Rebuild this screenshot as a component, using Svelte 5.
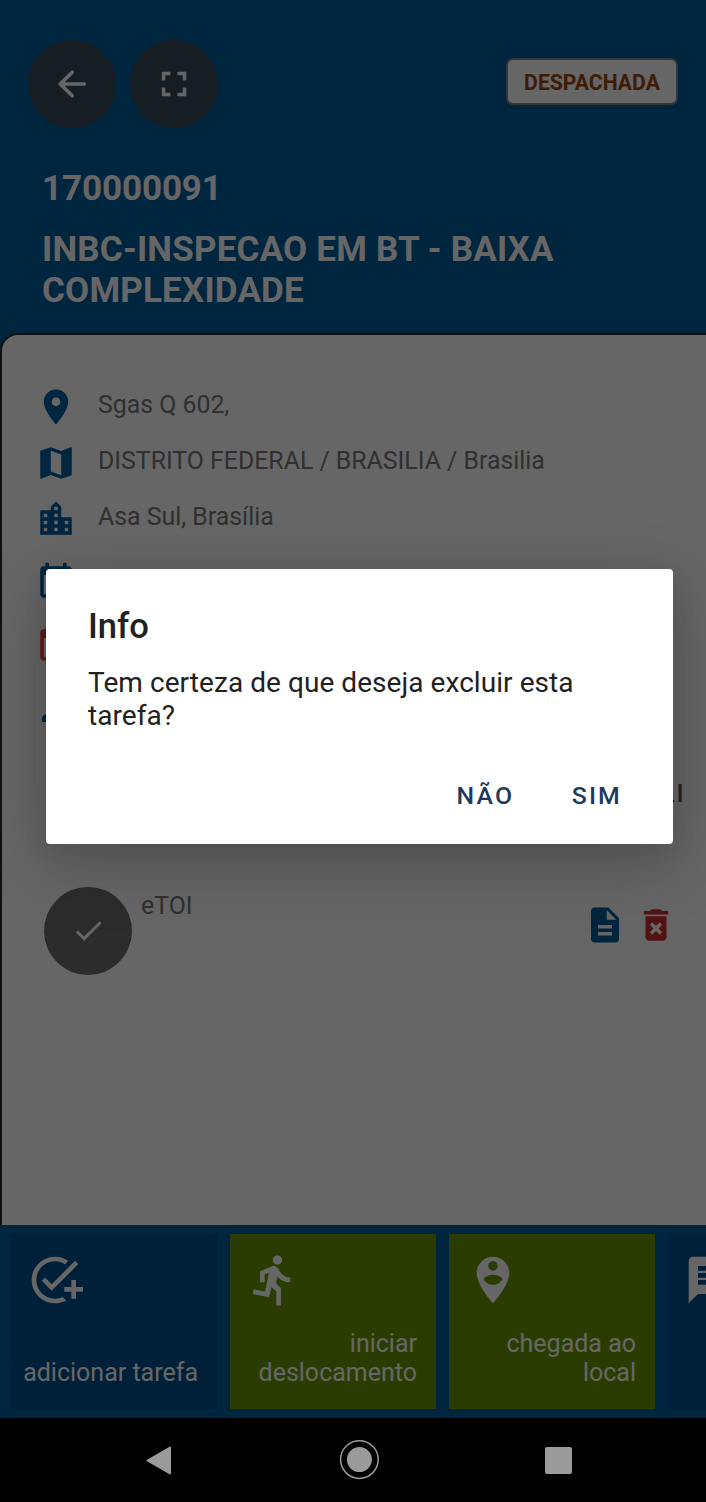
<script>
  const P = {
    pin: 'M12 2C8.13 2 5 5.13 5 9c0 5.25 7 13 7 13s7-7.75 7-13c0-3.87-3.13-7-7-7zm0 9.5c-1.38 0-2.5-1.12-2.5-2.5s1.12-2.5 2.5-2.5 2.5 1.12 2.5 2.5-1.12 2.5-2.5 2.5z',
    map: 'M20.5 3l-.16.03L15 5.1 9 3 3.36 4.9c-.21.07-.36.25-.36.48V20.5c0 .28.22.5.5.5l.16-.03L9 18.9l6 2.1 5.64-1.9c.21-.07.36-.25.36-.48V3.5c0-.28-.22-.5-.5-.5zM15 19l-6-2.11V5l6 2.11V19z',
    city: 'M15 11V5l-3-3-3 3v2H3v14h18V11h-6zm-8 8H5v-2h2v2zm0-4H5v-2h2v2zm0-4H5V9h2v2zm6 8h-2v-2h2v2zm0-4h-2v-2h2v2zm0-4h-2V9h2v2zm0-4h-2V5h2v2zm6 12h-2v-2h2v2zm0-4h-2v-2h2v2z',
    calendar: 'M19 3h-1V1h-2v2H8V1H6v2H5c-1.11 0-2 .9-2 2v14c0 1.1.89 2 2 2h14c1.1 0 2-.9 2-2V5c0-1.1-.9-2-2-2zm0 16H5V8h14v11z',
    person: 'M12 12c2.21 0 4-1.79 4-4s-1.79-4-4-4-4 1.79-4 4 1.79 4 4 4zm0 2c-2.67 0-8 1.34-8 4v2h16v-2c0-2.66-5.33-4-8-4z',
    doc: 'M14 2H6c-1.1 0-1.99.9-1.99 2L4 20c0 1.1.89 2 1.99 2H18c1.1 0 2-.9 2-2V8l-6-6zm2 16H8v-2h8v2zm0-4H8v-2h8v2zm-3-5V3.5L18.5 9H13z',
    trash: 'M6 19c0 1.1.9 2 2 2h8c1.1 0 2-.9 2-2V7H6v12zm2.46-7.12l1.41-1.41L12 12.59l2.12-2.12 1.41 1.41L13.41 14l2.12 2.12-1.41 1.41L12 15.41l-2.12 2.12-1.41-1.41L10.59 14l-2.13-2.12zM15.5 4l-.7-.7q-.3-.3-.8-.3h-4q-.5 0-.8.3l-.7.7H5v2h14V4z',
    check: 'M9 16.17L4.83 12l-1.42 1.41L9 19 21 7l-1.41-1.41z',
    fullscreen: 'M7 14H5v5h5v-2H7v-3zm-2-4h2V7h3V5H5v5zm12 7h-3v2h5v-5h-2v3zM14 5v2h3v3h2V5h-5z',
    addTask: 'M22 5.18L10.59 16.6l-4.24-4.24 1.41-1.41 2.83 2.83 10-10L22 5.18zM12 20c-4.42 0-8-3.58-8-8s3.58-8 8-8c1.57 0 3.04.46 4.28 1.25l1.45-1.45C16.1 2.67 14.13 2 12 2 6.48 2 2 6.48 2 12s4.48 10 10 10c1.73 0 3.36-.44 4.78-1.22l-1.5-1.5c-1 .46-2.11.72-3.28.72zM19 15h-3v2h3v3h2v-3h3v-2h-3v-3h-2v3z',
    run: 'M13.49 5.48c1.1 0 2-.9 2-2s-.9-2-2-2-2 .9-2 2 .9 2 2 2zm-3.6 13.9l1-4.4 2.1 2v6h2v-7.5l-2.1-2 .6-3c1.3 1.5 3.3 2.5 5.5 2.5v-2c-1.9 0-3.5-1-4.3-2.4l-1-1.6c-.4-.6-1-1-1.7-1-.3 0-.5.1-.8.1l-5.2 2.2v4.7h2v-3.4l1.8-.7-1.6 8.1-4.9-1-.4 2 7 1.4z',
    arrive: 'M12 2C8.14 2 5 5.14 5 9c0 5.25 7 13 7 13s7-7.75 7-13c0-3.86-3.14-7-7-7zm0 2c1.1 0 2 .9 2 2 0 1.11-.9 2-2 2s-2-.89-2-2c0-1.1.9-2 2-2zm0 10c-1.67 0-3.14-.85-4-2.15.02-1.32 2.67-2.05 4-2.05s3.98.73 4 2.05c-.86 1.3-2.33 2.15-4 2.15z',
    chat: 'M20 2H4c-1.1 0-1.99.9-1.99 2L2 22l4-4h14c1.1 0 2-.9 2-2V4c0-1.1-.9-2-2-2zM6 9h12v2H6V9zm8 5H6v-2h8v2zm4-6H6V6h12v2z'
  };

  const rows = [
    { icon: P.pin, text: 'Sgas Q 602,' },
    { icon: P.map, text: 'DISTRITO FEDERAL / BRASILIA / Brasilia' },
    { icon: P.city, text: 'Asa Sul, Brasília' },
    { icon: P.calendar, tall: true },
    { icon: P.calendar, tall: true, red: true },
    { icon: P.person, tall: true }
  ];

  const tiles = [
    { icon: P.addTask, text: 'adicionar tarefa' },
    { icon: P.run, text: 'iniciar deslocamento', green: true },
    { icon: P.arrive, text: 'chegada ao local', green: true },
    { icon: P.chat, text: '' }
  ];
</script>

{#snippet glyph(d, size)}
  <svg class="glyph" width={size} height={size} viewBox="0 0 24 24"><path {d} fill="currentColor" fill-rule="evenodd" /></svg>
{/snippet}

<div class="screen">
  <header>
    <div class="bar">
      <button class="round" aria-label="Voltar">
        <svg width="42" height="42" viewBox="0 0 42 42" fill="none" stroke="#fff" stroke-width="3.7" stroke-linecap="round" stroke-linejoin="round">
          <path d="M33.3 21H9.3M21.3 9.3L9.3 21l12 11.7" />
        </svg>
      </button>
      <button class="round" aria-label="Tela cheia">{@render glyph(P.fullscreen, 42)}</button>
      <span class="badge">DESPACHADA</span>
    </div>
    <h1>170000091</h1>
    <h2>INBC-INSPECAO EM BT - BAIXA COMPLEXIDADE</h2>
  </header>

  <main>
    <ul>
      {#each rows as r}
        <li class:tall={r.tall} class:red={r.red}>
          {@render glyph(r.icon, 42)}
          {#if r.text}<span>{r.text}</span>{/if}
        </li>
      {/each}
    </ul>
    <p class="section">AI</p>
    <div class="task">
      <div class="done">{@render glyph(P.check, 35)}</div>
      <span class="name">eTOI</span>
      <div class="doc">{@render glyph(P.doc, 42)}</div>
      <div class="trash">{@render glyph(P.trash, 42)}</div>
    </div>
  </main>

  <footer>
    {#each tiles as t}
      <div class="tile" class:green={t.green}>
        {@render glyph(t.icon, 56)}
        <span>{t.text}</span>
      </div>
    {/each}
  </footer>

  <nav>
    <svg width="30" height="34" viewBox="0 0 30 34"><path d="M3.5 17.5L26 4.5v26z" fill="#9b9b9b" stroke="#9b9b9b" stroke-width="2" stroke-linejoin="round" /></svg>
    <svg width="40" height="40" viewBox="0 0 40 40"><circle cx="20.4" cy="19.6" r="18.8" fill="none" stroke="#9b9b9b" stroke-width="1.5" /><circle cx="20.4" cy="19.6" r="12.5" fill="#9b9b9b" /></svg>
    <div class="square"></div>
  </nav>

  <div class="scrim">
    <div class="dialog">
      <h3>Info</h3>
      <p>Tem certeza de que deseja excluir esta tarefa?</p>
      <div class="actions">
        <button>NÃO</button>
        <button>SIM</button>
      </div>
    </div>
  </div>
</div>

<style>
  :global(body) { margin: 0; background: #000; }
  * { box-sizing: border-box; }
  .screen {
    position: relative;
    width: 706px;
    height: 1502px;
    overflow: hidden;
    display: flex;
    flex-direction: column;
    background: #005c9e;
    font-family: Roboto, sans-serif;
  }
  button { border: 0; padding: 0; margin: 0; background: none; font-family: inherit; }
  h1, h2, h3, p, ul { margin: 0; padding: 0; }
  .glyph { display: block; flex: none; }
  header { height: 333px; padding: 40px 28px 0; color: #fff; flex: none; }
  .bar { display: flex; gap: 14px; height: 88px; }
  .round {
    width: 88px;
    height: 88px;
    border-radius: 50%;
    background: #394d5a;
    color: #fff;
    display: flex;
    align-items: center;
    justify-content: center;
  }
  .badge {
    margin: 18px 0 0 auto;
    width: 172px;
    height: 47px;
    border: 2px solid #858585;
    border-radius: 7px;
    background: #fff;
    color: #9e460a;
    font-size: 21.2px;
    font-weight: 700;
    line-height: 46px;
    text-align: center;
  }
  h1 { margin: 40px 14px 0; font-size: 35px; line-height: 41px; letter-spacing: -0.1px; }
  h2 { margin: 20px 14px 0; font-size: 35px; line-height: 41px; letter-spacing: 0.19px; }
  main {
    width: 720px;
    height: 892px;
    flex: none;
    border: 2px solid #2b2b2b;
    border-bottom: 0;
    border-top-left-radius: 18px;
    background: #fff;
    color: #787878;
    font-size: 24.85px;
    padding: 44px 0 0 33px;
  }
  ul { list-style: none; }
  li { display: flex; align-items: center; gap: 21px; height: 56px; color: #005c9e; }
  li.tall { height: 63px; padding-top: 7px; }
  li.red { color: #f44336; }
  li span { padding-bottom: 5px; color: #787878; }
  .section { margin: 42px 32.5px 0 0; padding-top: 1px; text-align: right; line-height: 30px; letter-spacing: 2px; color: #555; font-weight: 500; }
  .task { display: flex; margin-top: 78px; padding-left: 9px; }
  .done {
    width: 88px;
    height: 88px;
    border-radius: 50%;
    background: #6e6e6e;
    color: #fff;
    display: flex;
    align-items: center;
    justify-content: center;
    padding-bottom: 1px;
  }
  .name { margin-left: 9px; line-height: 38px; width: 443px; }
  .doc { color: #005c9e; padding-top: 17px; }
  .trash { color: #d32f2f; padding: 17px 0 0 9px; }
  footer { display: flex; gap: 13px; height: 193px; padding: 9px 11px; flex: none; }
  .tile {
    flex: none;
    width: 206px;
    height: 175px;
    border-radius: 3px;
    background: #005091;
    color: #fff;
    padding: 18px 19px 22px 16px;
    display: flex;
    flex-direction: column;
    justify-content: space-between;
  }
  .tile.green { background: #6c9600; border-radius: 0; }
  .tile span { font-size: 25px; line-height: 29px; text-align: right; margin-left: -10px; }
  nav { position: relative; z-index: 2; height: 84px; background: #000; display: flex; align-items: center; flex: none; padding-left: 144px; }
  nav svg:nth-child(2) { margin-left: 165px; }
  .square { width: 27px; height: 27px; border-radius: 2px; background: #9b9b9b; margin-left: 166px; }
  .scrim { position: absolute; inset: 0; background: rgba(0, 0, 0, 0.6); padding: 569px 33px 0 46px; }
  .dialog {
    height: 275px;
    background: #fff;
    border-radius: 4px;
    box-shadow: 0 19px 66px 4px rgba(0, 0, 0, 0.2), 0 8px 26px rgba(0, 0, 0, 0.08);
    padding: 37px 42px 0;
    color: #212121;
  }
  h3 { font-size: 34.6px; font-weight: 500; line-height: 41px; }
  .dialog p { margin-top: 19px; font-size: 28px; line-height: 33px; letter-spacing: 0.06px; }
  .actions { display: flex; justify-content: flex-end; gap: 57.5px; margin: 49px 9px 0 0; }
  .actions button { color: #1d3a5c; font-size: 24.8px; font-weight: 500; letter-spacing: 2.2px; line-height: 30px; }
</style>
